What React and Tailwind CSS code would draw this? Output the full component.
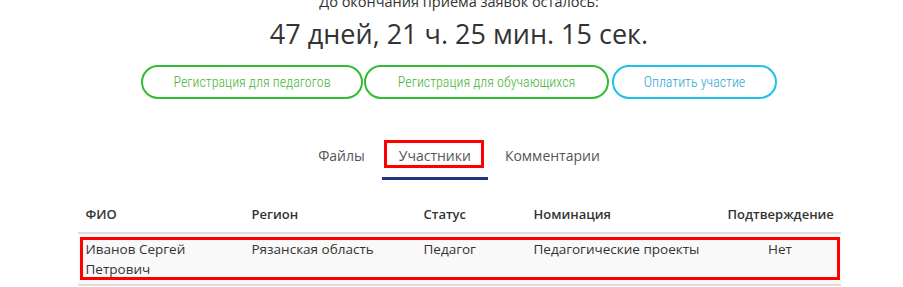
import React from 'react';

const columns = [
  { title: 'ФИО', className: 'text-left' },
  { title: 'Регион', className: 'text-left' },
  { title: 'Статус', className: 'text-left' },
  { title: 'Номинация', className: 'text-left' },
  { title: 'Подтверждение', className: 'text-center' },
];

const rows = [
  ['Иванов Сергей Петрович', 'Рязанская область', 'Педагог', 'Педагогические проекты', 'Нет'],
];

const tabs = [
  { name: 'Файлы', active: false },
  { name: 'Участники', active: true },
  { name: 'Комментарии', active: false },
];

export default function App() {
  return (
    <div className="w-[903px] h-[287px] overflow-hidden bg-white text-[#333] font-['Open_Sans',sans-serif]">
      <div className="pl-[15px] flex flex-col items-center">
        {/* Countdown */}
        <div className="mt-[-9px] h-[22px] text-[14.5px] leading-[22px] text-[#333]">
          До окончания приема заявок осталось:
        </div>
        <div className="mt-[3px] h-[36px] text-[27px] leading-[36px] text-[#333]">
          47 дней, 21 ч. 25 мин. 15 сек.
        </div>

        {/* Buttons */}
        <div className="mt-[13px] flex items-center gap-[1px] font-['Roboto_Condensed','Liberation_Sans_Narrow','DejaVu_Sans_Condensed',Roboto,sans-serif] text-[14px] font-light">
          <button className="h-[34px] w-[222px] rounded-full border-2 border-[#33bb33] text-[#44b535]">
            Регистрация для педагогов
          </button>
          <button className="h-[34px] w-[245px] rounded-full border-2 border-[#33bb33] text-[#44b535]">
            Регистрация для обучающихся
          </button>
          <button className="ml-[2px] h-[34px] w-[165px] rounded-full border-2 border-[#1cc2ea] text-[#2aa7d6]">
            Оплатить участие
          </button>
        </div>

        {/* Tabs */}
        <div className="mt-[38px] flex">
          {tabs.map((tab) => (
            <div
              key={tab.name}
              className={`relative px-[17px] pt-[9px] pb-[11px] text-[14px] leading-[20px] text-[#555] border-b-[3px] ${
                tab.active ? 'border-[#1f3480]' : 'border-transparent'
              }`}
            >
              {tab.name}
              {tab.active && (
                <div className="absolute top-[3px] left-[2px] right-[4px] h-[28px] border-[3px] border-[#ff0000]" />
              )}
            </div>
          ))}
        </div>

        {/* Table */}
        <div className="mt-[16px] w-[763px] text-[13.5px] leading-[20px]">
          <div className="grid grid-cols-[166px_172px_110px_194px_121px] border-b-2 border-[#dddddd] font-semibold text-[13px]">
            {columns.map((col) => (
              <div key={col.title} className={`px-[8px] py-[8px] ${col.className}`}>
                {col.title}
              </div>
            ))}
          </div>
          {rows.map((row, i) => (
            <div
              key={i}
              className="relative grid grid-cols-[166px_172px_110px_194px_121px] bg-[#f9f9f9] border-b-2 border-[#dddddd]"
            >
              {row.map((cell, j) => (
                <div key={j} className={`px-[8px] pt-[5px] pb-[5px] ${columns[j].className}`}>
                  {cell}
                </div>
              ))}
              <div className="absolute top-[3px] left-[2px] right-[1px] bottom-[4px] border-[3px] border-[#ff0000]" />
            </div>
          ))}
        </div>
      </div>
    </div>
  );
}
